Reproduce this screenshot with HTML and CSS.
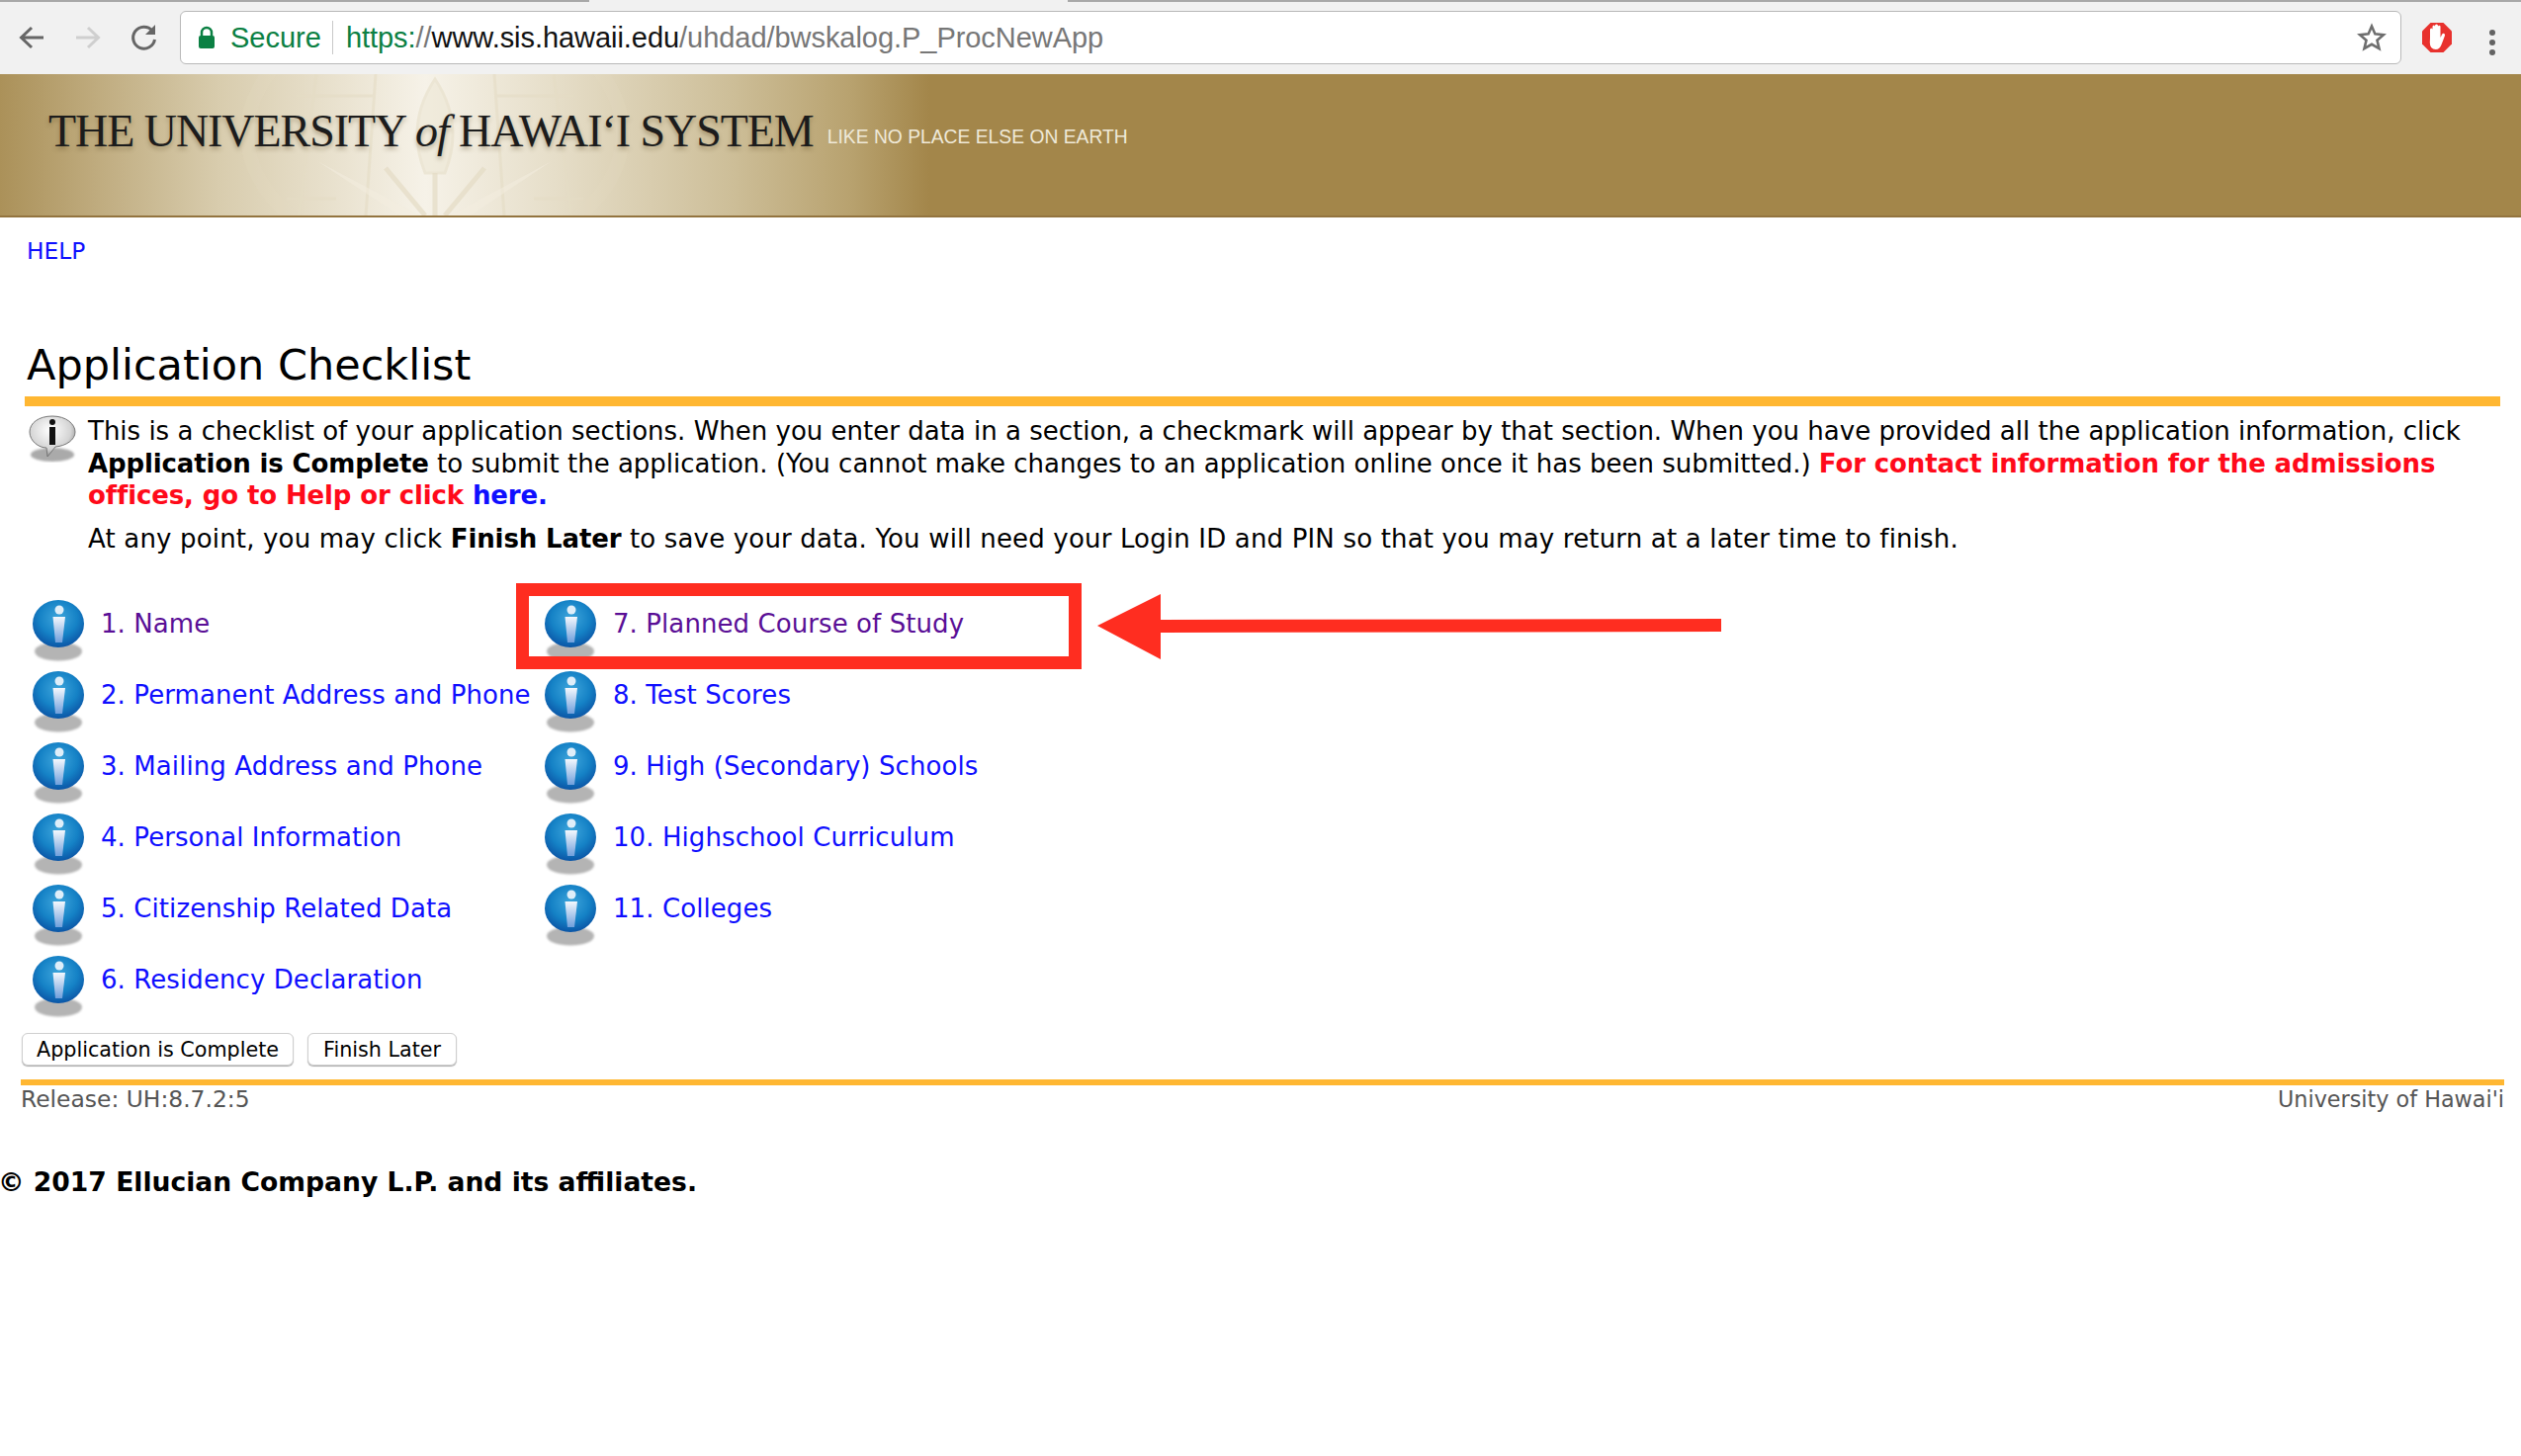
FILE: index.html
```html
<!doctype html>
<html>
 <head>
  <title>Application Checklist</title>
  <link rel="stylesheet" href="styles.css">
 </head>
 <body>
  <svg class="defs" width="0" height="0">
   <defs>
    <radialGradient id="ball" cx="50%" cy="38%" r="62%">
     <stop offset="0" stop-color="#3fa6dc"/>
     <stop offset="0.6" stop-color="#1582c6"/>
     <stop offset="1" stop-color="#0b55a6"/>
    </radialGradient>
    <linearGradient id="stem" x1="0" y1="0" x2="0" y2="1">
     <stop offset="0" stop-color="#f4f8fd"/>
     <stop offset="1" stop-color="#6f9fdc"/>
    </linearGradient>
    <radialGradient id="bubble" cx="45%" cy="35%" r="70%">
     <stop offset="0" stop-color="#ffffff"/>
     <stop offset="0.65" stop-color="#d4d4d4"/>
     <stop offset="1" stop-color="#7d7d7d"/>
    </radialGradient>
    <filter id="soft"><feGaussianBlur stdDeviation="1"/></filter>
    <symbol id="info-ball" viewBox="0 0 52 64">
     <ellipse cx="26" cy="52" rx="24" ry="9.500" fill="#b4b4b4" filter="url(#soft)"/>
     <ellipse cx="26" cy="24" rx="26" ry="24" fill="url(#ball)"/>
     <circle cx="27" cy="10" r="4.500" fill="#dfeef9"/>
     <path d="M20.500 17h12.500l-3 26h-7z" fill="url(#stem)"/>
    </symbol>
   </defs>
  </svg>

  <div class="tabstrip"><span class="tab-line left"></span><span class="tab-line right"></span></div>
  <div class="toolbar">
   <svg class="nav" width="30" height="30" viewBox="0 0 30 30"><path d="M27 15H6M15 5L4.500 15 15 25" fill="none" stroke="#666" stroke-width="3"/></svg>
   <svg class="nav" width="30" height="30" viewBox="0 0 30 30"><path d="M3 15h21M15 5l10.500 10L15 25" fill="none" stroke="#cfcfcf" stroke-width="3"/></svg>
   <svg class="nav" width="30" height="30" viewBox="0 0 30 30"><path d="M25.500 17a11 11 0 1 1-2.500-9" fill="none" stroke="#666" stroke-width="3"/><path d="M26 2v10H16z" fill="#666"/></svg>
   <div class="omnibox">
    <svg class="lock" width="18" height="24" viewBox="0 0 18 24"><path d="M4 10V7a5 5 0 0 1 10 0v3" fill="none" stroke="#0b8043" stroke-width="2.500"/><rect x="1" y="10" width="16" height="13" rx="2" fill="#0b8043"/></svg>
    <span class="secure">Secure</span>
    <span class="omni-sep"></span>
    <span class="url"><span class="url-green">https:</span><span class="url-grey">//</span><span class="url-host">www.sis.hawaii.edu</span><span class="url-grey">/uhdad/bwskalog.P_ProcNewApp</span></span>
    <svg class="star" width="30" height="30" viewBox="0 0 30 30"><path d="M15 3.500l3.400 7.900 8.600.8-6.500 5.600 2 8.400L15 21.800 7.500 26.200l2-8.400L3 12.200l8.600-.8z" fill="#fff" stroke="#6e6e6e" stroke-width="2.600" stroke-linejoin="miter"/></svg>
   </div>
   <svg class="abp" width="32" height="32" viewBox="0 0 32 32">
    <path d="M9.500 1h13L31 9.500v13L22.500 31h-13L1 22.500v-13z" fill="#e8312d"/>
    <path d="M9 16V8q0-1.500 1.300-1.500T11.500 8V5q0-1.500 1.300-1.500T14 5V4q0-1.500 1.500-1.500T17 4v1q0-1.300 1.300-1.300T19.500 5v11l1.500-3q1-1.700 2.300-1t.5 2.500l-3 8q-2 5.500-6 5.500-6 0-6-7z" fill="#fff"/>
   </svg>
   <div class="menu-dots"><span></span><span></span><span></span></div>
  </div>

  <div class="banner">
   <svg class="seal" width="500" height="143" viewBox="0 0 500 143" fill="none" stroke="#e4dcc4" stroke-width="3">
    <ellipse cx="250" cy="60" rx="190" ry="130" stroke-width="14" opacity="0.2"/>
    <path d="M130 0l-18 143M190 0l-10 143M310 0l10 143M370 0l18 143M110 22h80M310 22h80M100 126h50M350 126h50" opacity="0.6"/>
    <path d="M250 5q-30 45-10 95h20q20-50-10-95z" fill="#ece6d2" opacity="0.5"/>
    <path d="M131 88l104 55h30l103-55-82 55h-72z" fill="#f3eee0" opacity="0.5" stroke="none"/>
    <path d="M200 95l40 48M300 95l-40 48M250 100v43" stroke-width="5" opacity="0.7"/>
   </svg>
   <span class="banner-title">THE UNIVERSITY <i>of</i> HAWAI&lsquo;I SYSTEM</span>
   <span class="banner-tag">LIKE NO PLACE ELSE ON EARTH</span>
  </div>

  <div class="page">
   <a class="help" href="#">HELP</a>
   <h1 class="page-title">Application Checklist</h1>
   <div class="notice">
    <svg class="notice-icon" width="48" height="48" viewBox="0 0 48 48">
     <ellipse cx="24" cy="40" rx="22" ry="7" fill="#aaa" filter="url(#soft)"/>
     <path d="M24 1C10 1 1 8 1 17s9 16 17 16l1 9 8-10c11-1 20-7 20-15S38 1 24 1z" fill="url(#bubble)" stroke="#777"/>
     <circle cx="24" cy="7" r="3" fill="#111"/>
     <path d="M21 12h6v18h-6z" fill="#111"/>
    </svg>
    <div class="notice-text">
     <p class="notice-par">This is a checklist of your application sections. When you enter data in a section, a checkmark will appear by that section. When you have provided all the application information, click<br>
     <b>Application is Complete</b> to submit the application. (You cannot make changes to an application online once it has been submitted.) <b class="warn">For contact information for the admissions<br>
     offices, go to Help or click <a href="#">here.</a></b></p>
     <p class="notice-par later">At any point, you may click <b>Finish Later</b> to save your data. You will need your Login ID and PIN so that you may return at a later time to finish.</p>
    </div>
   </div>

   <div class="checklist">
    <div class="check-col first">
     <div class="check-row"><svg class="ball"><use href="#info-ball"/></svg><a class="visited" href="#">1. Name</a></div>
     <div class="check-row"><svg class="ball"><use href="#info-ball"/></svg><a href="#">2. Permanent Address and Phone</a></div>
     <div class="check-row"><svg class="ball"><use href="#info-ball"/></svg><a href="#">3. Mailing Address and Phone</a></div>
     <div class="check-row"><svg class="ball"><use href="#info-ball"/></svg><a href="#">4. Personal Information</a></div>
     <div class="check-row"><svg class="ball"><use href="#info-ball"/></svg><a href="#">5. Citizenship Related Data</a></div>
     <div class="check-row"><svg class="ball"><use href="#info-ball"/></svg><a href="#">6. Residency Declaration</a></div>
    </div>
    <div class="check-col">
     <div class="check-row"><svg class="ball"><use href="#info-ball"/></svg><a class="visited" href="#">7. Planned Course of Study</a></div>
     <div class="check-row"><svg class="ball"><use href="#info-ball"/></svg><a href="#">8. Test Scores</a></div>
     <div class="check-row"><svg class="ball"><use href="#info-ball"/></svg><a href="#">9. High (Secondary) Schools</a></div>
     <div class="check-row"><svg class="ball"><use href="#info-ball"/></svg><a href="#">10. Highschool Curriculum</a></div>
     <div class="check-row"><svg class="ball"><use href="#info-ball"/></svg><a href="#">11. Colleges</a></div>
    </div>
   </div>

   <div class="actions">
    <button type="button" class="btn wide">Application is Complete</button>
    <button type="button" class="btn narrow">Finish Later</button>
   </div>
   <div class="foot">
    <span class="release">Release: UH:8.7.2:5</span>
    <span>University of Hawai'i</span>
   </div>
  </div>
  <p class="copyright">&copy; 2017 Ellucian Company L.P. and its affiliates.</p>

  <div class="callout-box"></div>
  <svg class="callout-arrow" width="632" height="66" viewBox="0 0 632 66"><path d="M0 32L64 0v26l567-1v13L64 39v27z" fill="#ff2d20"/></svg>
 </body>
</html>
```

FILE: styles.css
```css
html, body {
  margin: 0;
  padding: 0;
  background-color: #fff;
  font-family: "DejaVu Sans", sans-serif;
  color: #000;
}

.defs {
  position: absolute;
}

a {
  color: #0f0fff;
  text-decoration: none;
}

a.visited {
  color: #5a0f96;
}

/* browser chrome */
.tabstrip {
  height: 11px;
  background-color: #f1f1f1;
  display: flex;
  justify-content: space-between;
}

.tab-line {
  height: 2px;
  background-color: #a8a8a8;
}

.tab-line.left {
  width: 596px;
}

.tab-line.right {
  width: 1470px;
}

.toolbar {
  height: 64px;
  background-color: #f1f1f1;
  display: flex;
  align-items: flex-start;
  padding-left: 17px;
  box-sizing: border-box;
}

.nav {
  margin-top: 12px;
  margin-right: 27px;
}

.omnibox {
  width: 2247px;
  height: 54px;
  margin-left: -6px;
  box-sizing: border-box;
  background-color: #fff;
  border: 1px solid #b9b9b9;
  border-radius: 6px;
  display: flex;
  align-items: center;
  padding-left: 17px;
  font-family: "Liberation Sans", sans-serif;
  font-size: 29px;
}

.lock {
  margin-right: 15px;
}

.secure {
  color: #0b8043;
}

.omni-sep {
  width: 1px;
  height: 34px;
  background-color: #c8c8c8;
  margin: 0 13px 0 11px;
}

.url {
  flex: 1;
  letter-spacing: -0.05px;
}

.url-green {
  color: #0b8043;
}

.url-grey {
  color: #777;
}

.url-host {
  color: #111;
}

.star {
  margin-right: 14px;
}

.abp {
  margin: 11px 0 0 20px;
}

.menu-dots {
  margin: 19px 0 0 37px;
  display: flex;
  flex-direction: column;
  gap: 4px;
}

.menu-dots span {
  width: 6px;
  height: 6px;
  border-radius: 50%;
  background-color: #636363;
}

/* banner */
.banner {
  position: relative;
  height: 145px;
  box-sizing: border-box;
  overflow: hidden;
  border-bottom: 2px solid #93743f;
  background: linear-gradient(90deg, #ab9159 0, #d8ccad 220px, #f6f2e8 430px, #e6dec9 560px, #cdbe98 740px, #b8a26f 860px, #a3864a 940px);
  padding: 31px 0 0 49px;
}

.seal {
  position: absolute;
  left: 190px;
  top: 0;
}

.banner-title {
  position: relative;
  font-family: "Liberation Serif", serif;
  font-size: 46px;
  letter-spacing: -1.050px;
  color: #1c1c1c;
  text-shadow: 0 3px 4px rgba(90, 70, 30, 0.35);
  white-space: nowrap;
}

.banner-tag {
  position: relative;
  font-family: "Liberation Sans", sans-serif;
  font-size: 19.300px;
  color: #efe9d8;
  margin-left: 9px;
  vertical-align: 3px;
  white-space: nowrap;
}

/* page */
.page {
  padding: 0 17px 0 21px;
}

.help {
  display: block;
  font-size: 23.300px;
  line-height: 28px;
  padding: 20px 0 0 6px;
}

.page-title {
  margin: 73px 0 0 6px;
  font-size: 43px;
  font-weight: normal;
  line-height: 56px;
}

.notice {
  margin: 4px 4px 0 4px;
  border-top: 10px solid #ffb732;
  display: flex;
  padding-top: 9px;
}

.notice-icon {
  flex: none;
  margin: 0 12px 0 4px;
}

.notice-text {
  font-size: 26px;
}

.notice-par {
  margin: 0 0 11px;
  line-height: 32.500px;
  white-space: nowrap;
}

.notice-par b {
  letter-spacing: -0.12px;
}

.notice-par.later {
  letter-spacing: 0.17px;
}

.warn {
  color: #ff0a1a;
}

.checklist {
  display: flex;
  margin-top: 37px;
  padding-left: 12px;
}

.check-col {
  width: 518px;
}

.check-row {
  height: 72px;
  display: flex;
  align-items: flex-start;
  gap: 17px;
  font-size: 26px;
  letter-spacing: 0.08px;
  line-height: 44px;
  white-space: nowrap;
}

.ball {
  flex: none;
  width: 52px;
  height: 64px;
  margin-top: -2px;
}

.actions {
  display: flex;
  gap: 14px;
  margin-top: 4px;
  padding-left: 1px;
}

.btn {
  height: 33px;
  padding: 0;
  background-color: #fff;
  border: 1px solid #cfcfcf;
  border-radius: 6px;
  box-shadow: 0 1px 1px #aaa;
  font-family: "DejaVu Sans", sans-serif;
  font-size: 20.700px;
  color: #000;
}

.btn.wide {
  width: 275px;
}

.btn.narrow {
  width: 151px;
}

.foot {
  margin-top: 14px;
  border-top: 6px solid #ffb732;
  display: flex;
  justify-content: space-between;
  font-size: 22.300px;
  line-height: 28px;
  color: #555;
}

.release {
  font-size: 23.400px;
}

.copyright {
  margin: 54px 0 0 -2px;
  font-size: 26.600px;
  font-weight: bold;
  line-height: 32px;
  white-space: nowrap;
}

/* annotation drawn over the screenshot */
.callout-box {
  position: absolute;
  left: 522px;
  top: 590px;
  width: 572px;
  height: 87px;
  box-sizing: border-box;
  border: 13px solid #ff2d20;
}

.callout-arrow {
  position: absolute;
  left: 1110px;
  top: 601px;
}
```
